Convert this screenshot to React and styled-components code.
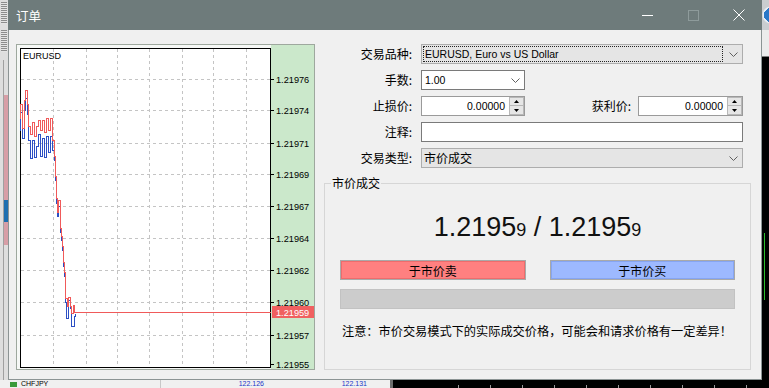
import React from 'react';
import styled, { createGlobalStyle } from 'styled-components';

const GlobalStyle = createGlobalStyle`
  html, body {
    margin: 0;
    padding: 0;
    background: #f0f0f0;
  }
  body {
    font-family: "Liberation Sans", "Noto Sans CJK SC", sans-serif;
    color: #000;
  }
`;

const cjk = `"Noto Sans CJK SC", "Liberation Sans", sans-serif`;

// chart data, drawn in page coordinates (viewBox matches the panel position)
const askPath =
  'M20 118V104H22V128H24V100H25V90H27V104H28V126H30V134H32V122H34V136H36V126H38V120H40V130H42V120H44V132H46V118H48V130H50V118H52V140H54V156H55V176H56V198H57V212H58V200H60V228H61V236H62V246H63V262H64V272H65V298H67V306H68V297H70V306H71V313H73V305H74V312H270';
const bidPath =
  'M20 130V112H22V138H24V110H25V98H27V114H28V140H30V158H32V140H34V157H36V146H38V134H40V156H42V138H44V157H46V136H48V152H50V136H52V150H54V160H55V180H56V203H57V216H58V206H60V232H61V240H62V250H63V266H64V276H65V302H66V318H68V300H70V308H71V326H74V316H75V313';

const gridX = [53, 86, 117, 149, 182, 213, 246];
const gridY = [79, 110, 143, 174, 206, 238, 270, 302, 335];
const axisLabels = [
  [79, '1.21976'],
  [110, '1.21974'],
  [143, '1.21971'],
  [174, '1.21969'],
  [206, '1.21967'],
  [238, '1.21964'],
  [270, '1.21962'],
  [302, '1.21960'],
  [335, '1.21957'],
  [364, '1.21955'],
];

const Chart = () => (
  <ChartSvg viewBox="17 45 297 324" width="297" height="324">
    <rect x="17" y="45" width="297" height="324" fill="#f6f8f6" />
    <rect x="271" y="45" width="43" height="324" fill="#cbe8cb" />
    <rect x="20.5" y="48.5" width="250" height="319" fill="#fff" stroke="#000" />
    {gridX.map((x) => (
      <line key={x} x1={x + 0.5} x2={x + 0.5} y1="49" y2="367" stroke="#c4c4c4" strokeDasharray="3 3" />
    ))}
    {gridY.map((y) => (
      <line key={y} x1="21" x2="270" y1={y + 0.5} y2={y + 0.5} stroke="#c4c4c4" strokeDasharray="3 3" />
    ))}
    <g transform="translate(0.5 0.5)" shapeRendering="crispEdges">
      <path d={bidPath} fill="none" stroke="#2c4fc4" strokeWidth="1" />
      <path d={askPath} fill="none" stroke="#f05a5a" strokeWidth="1" />
    </g>
    {axisLabels.map(([y, t]) => (
      <g key={t}>
        <line x1="271" x2="274" y1={y + 0.5} y2={y + 0.5} stroke="#000" />
        <text x="276" y={y + 3.5} fontSize="9.2" fontFamily="Liberation Sans, sans-serif" fill="#000">
          {t}
        </text>
      </g>
    ))}
    <rect x="272" y="306" width="42" height="12" fill="#f06060" />
    <text x="276" y="315.5" fontSize="9.2" fontFamily="Liberation Sans, sans-serif" fill="#fff">
      1.21959
    </text>
    <text x="23" y="59" fontSize="9" fontFamily="Liberation Sans, sans-serif" fill="#000">
      EURUSD
    </text>
  </ChartSvg>
);

const Chevron = () => (
  <ChevronBox>
    <svg width="9" height="5" viewBox="0 0 9 5">
      <polyline points="0.5,0.5 4.5,4.5 8.5,0.5" fill="none" stroke="#606060" />
    </svg>
  </ChevronBox>
);

const Spin = ({ value, width }) => (
  <SpinBox $width={width}>
    <SpinValue>{value}</SpinValue>
    <SpinButtons>
      <SpinButton>
        <svg width="5" height="3" viewBox="0 0 5 3">
          <path d="M0 3L2.5 0L5 3Z" fill="#000" />
        </svg>
      </SpinButton>
      <SpinButton>
        <svg width="5" height="3" viewBox="0 0 5 3">
          <path d="M0 0L2.5 3L5 0Z" fill="#000" />
        </svg>
      </SpinButton>
    </SpinButtons>
  </SpinBox>
);

export default function App() {
  return (
    <>
      <GlobalStyle />
      <Desktop>
        <LeftStrip />
        <Window>
          <TitleBar>
            <Title>订单</Title>
            <Controls>
              <CtrlButton>
                <svg width="11" height="11" viewBox="0 0 11 11">
                  <path d="M0 5.5H11" stroke="#fff" />
                </svg>
              </CtrlButton>
              <CtrlButton>
                <svg width="11" height="11" viewBox="0 0 11 11">
                  <rect x="0.5" y="0.5" width="10" height="10" fill="none" stroke="#8e9b9b" />
                </svg>
              </CtrlButton>
              <CtrlButton>
                <svg width="12" height="12" viewBox="0 0 12 12">
                  <path d="M0.5 0.5L11.5 11.5M11.5 0.5L0.5 11.5" stroke="#fff" />
                </svg>
              </CtrlButton>
            </Controls>
          </TitleBar>
          <Body>
            <ChartPanel>
              <Chart />
            </ChartPanel>
            <Side>
              <Form>
                <Label>交易品种:</Label>
                <Select $gray>
                  <Focus>EURUSD, Euro vs US Dollar</Focus>
                  <Chevron />
                </Select>

                <Label>手数:</Label>
                <Select $width={104} $dark>
                  <SelectValue>1.00</SelectValue>
                  <Chevron />
                </Select>

                <Label>止损价:</Label>
                <Pair>
                  <Spin value="0.00000" width={104} />
                  <InlineLabel>获利价:</InlineLabel>
                  <Spin value="0.00000" width={105} />
                </Pair>

                <Label>注释:</Label>
                <TextBox />

                <Label>交易类型:</Label>
                <Select $gray>
                  <SelectValue $cjk>市价成交</SelectValue>
                  <Chevron />
                </Select>
              </Form>

              <Group>
                <Legend>市价成交</Legend>
                <GroupBody>
                  <Price>
                    1.2195<Small>9</Small> / 1.2195<Small>9</Small>
                  </Price>
                  <Buttons>
                    <TradeButton $side="sell">于市价卖</TradeButton>
                    <TradeButton $side="buy">于市价买</TradeButton>
                  </Buttons>
                  <Progress />
                  <Note>注意：市价交易模式下的实际成交价格，可能会和请求价格有一定差异！</Note>
                </GroupBody>
              </Group>
            </Side>
          </Body>
        </Window>
        <RightStrip />
        <BottomStrip>
          <ListPart>
            <SymbolCell>
              <SymbolIcon />
              CHFJPY
            </SymbolCell>
            <PriceCell>122.126</PriceCell>
            <PriceCell>122.131</PriceCell>
          </ListPart>
          <DarkPart />
        </BottomStrip>
      </Desktop>
    </>
  );
}

const Desktop = styled.div`
  width: 769px;
  height: 388px;
  overflow: hidden;
  display: grid;
  grid-template-columns: 8px 754px 7px;
  grid-template-rows: 380px 8px;
`;

const LeftStrip = styled.div`
  background:
    linear-gradient(to bottom, transparent 0 95px, #d79ea6 95px 200px, #1e6fb0 200px 222px, #d79ea6 222px 245px, transparent 245px) 4px 0 / 4px 100% no-repeat,
    linear-gradient(to right, #a0a0a0 0 1px, transparent 1px) 3px 60px / 1px 100% no-repeat,
    repeating-linear-gradient(to bottom, #8c8c8c 0 1px, #e4e4e4 1px 2px) 1px 2px / 6px 22px no-repeat,
    repeating-linear-gradient(to bottom, #8c8c8c 0 1px, #e4e4e4 1px 2px) 1px 30px / 6px 22px no-repeat,
    #dedede;
`;

const RightStrip = styled.div`
  background:
    radial-gradient(circle at 9px 15px, #2a78c8 0 7px, #e8eef4 7px 8px, transparent 9px) 0 0 / 7px 30px no-repeat,
    linear-gradient(to bottom, transparent 0 233px, #2ec02e 233px 300px, transparent 300px) 2px 0 / 1px 100% no-repeat,
    linear-gradient(to bottom, #c9cdd0 0 30px, #ececec 30px 56px, #7a7a7a 56px 57px, #000 57px);
`;

const BottomStrip = styled.div`
  grid-column: 1 / -1;
  display: flex;
  overflow: hidden;
`;

const ListPart = styled.div`
  width: 390px;
  display: flex;
  background: #f0f0f0;
  border-right: 3px solid #6e6e6e;
  font-size: 7px;
  line-height: 8px;
`;

const SymbolCell = styled.div`
  width: 150px;
  padding-left: 10px;
  display: flex;
  align-items: center;
  gap: 4px;
  border-right: 1px solid #c8c8c8;
  color: #000;
`;

const SymbolIcon = styled.span`
  width: 7px;
  height: 5px;
  background: #3a9a3a;
`;

const PriceCell = styled.div`
  width: 103px;
  text-align: right;
  color: #2036c8;
`;

const DarkPart = styled.div`
  flex: 1;
  background:
    repeating-linear-gradient(to right, transparent 0 31px, #9a9a9a 31px 32px) 34px 5px / 100% 3px no-repeat,
    #000;
`;

const Window = styled.div`
  display: flex;
  flex-direction: column;
  background: #f0f0f0;
`;

const TitleBar = styled.div`
  height: 30px;
  flex: none;
  display: flex;
  align-items: center;
  background: #6e7b7b;
  padding-left: 8px;
`;

const Title = styled.div`
  flex: 1;
  color: #fff;
  font-family: ${cjk};
  font-size: 12.5px;
`;

const Controls = styled.div`
  display: flex;
  height: 100%;
`;

const CtrlButton = styled.div`
  width: 46px;
  display: flex;
  align-items: center;
  justify-content: center;

  svg {
    display: block;
  }
`;

const Body = styled.div`
  flex: 1;
  display: flex;
  gap: 9px;
  padding: 14px 10px 9px 7px;
  border: 1px solid #8c9494;
  border-top: 0;
`;

const ChartPanel = styled.div`
  width: 299px;
  border: 1px solid #9ea89e;
  box-sizing: border-box;
`;

const ChartSvg = styled.svg`
  display: block;
`;

const Side = styled.div`
  flex: 1;
  display: flex;
  flex-direction: column;
`;

const Form = styled.div`
  display: grid;
  grid-template-columns: 88px 1fr;
  grid-auto-rows: 20px;
  column-gap: 9px;
  row-gap: 6px;
  padding-right: 8px;
`;

const Label = styled.div`
  font-family: ${cjk};
  font-size: 12px;
  text-align: right;
  align-self: center;
  line-height: 16px;
`;

const InlineLabel = styled(Label)`
  flex: 1;
  margin-right: 7px;
`;

const Select = styled.div`
  box-sizing: border-box;
  height: 20px;
  width: ${(p) => (p.$width ? `${p.$width}px` : 'auto')};
  display: flex;
  align-items: stretch;
  background: ${(p) => (p.$gray ? '#e5e5e5' : '#fff')};
  border: 1px solid ${(p) => (p.$dark ? '#7a7a7a' : '#adadad')};
`;

const Focus = styled.div`
  flex: 1;
  margin: 1px;
  padding-left: 1px;
  border: 1px dotted #222;
  font-size: 10.5px;
  line-height: 14px;
  white-space: nowrap;
`;

const SelectValue = styled.div`
  flex: 1;
  padding-left: ${(p) => (p.$cjk ? '2px' : '3px')};
  font-family: ${(p) => (p.$cjk ? cjk : `"Liberation Sans", sans-serif`)};
  font-size: ${(p) => (p.$cjk ? '12px' : '10.5px')};
  line-height: 18px;
`;

const ChevronBox = styled.div`
  width: 18px;
  display: flex;
  align-items: center;
  justify-content: center;

  svg {
    display: block;
  }
`;

const Pair = styled.div`
  display: flex;
  align-items: stretch;
`;

const SpinBox = styled.div`
  box-sizing: border-box;
  width: ${(p) => p.$width}px;
  display: flex;
  background: #fff;
  border: 1px solid #9a9a9a;
`;

const SpinValue = styled.div`
  flex: 1;
  text-align: right;
  padding-right: 4px;
  font-size: 10.5px;
  line-height: 18px;
`;

const SpinButtons = styled.div`
  width: 15px;
  display: grid;
  grid-template-rows: 1fr 1fr;
`;

const SpinButton = styled.div`
  display: flex;
  align-items: center;
  justify-content: center;
  background: #e6e6e6;
  border: 1px solid #b8b8b8;
  margin-top: -1px;

  &:first-child {
    margin-top: 0;
  }

  svg {
    display: block;
  }
`;

const TextBox = styled.div`
  box-sizing: border-box;
  height: 20px;
  background: #fff;
  border: 1px solid #7a7a7a;
`;

const Group = styled.fieldset`
  flex: 1;
  margin: 8px 0 0;
  padding: 0;
  min-width: 0;
  border: 1px solid #d6d6d6;
  display: flex;
  flex-direction: column;
`;

const Legend = styled.legend`
  margin-left: 6px;
  padding: 0 1px;
  font-family: ${cjk};
  font-size: 12px;
  line-height: 14px;
`;

const GroupBody = styled.div`
  display: flex;
  flex-direction: column;
  padding: 0 15px;
`;

const Price = styled.div`
  margin-top: 21px;
  height: 32px;
  font-family: "Liberation Sans", sans-serif;
  font-size: 27px;
  line-height: 32px;
  text-align: center;
  color: #111;
`;

const Small = styled.span`
  font-size: 18px;
`;

const Buttons = styled.div`
  margin-top: 17px;
  display: grid;
  grid-template-columns: 1fr 1fr;
  column-gap: 24px;
`;

const TradeButton = styled.div`
  box-sizing: border-box;
  height: 20px;
  display: flex;
  align-items: center;
  justify-content: center;
  font-family: ${cjk};
  font-size: 12px;
  background: ${(p) => (p.$side === 'sell' ? '#ff8080' : '#9db9ff')};
  border: 1px solid #a9a9a9;
  box-shadow: inset 0 0 0 1px ${(p) => (p.$side === 'sell' ? '#ee6c6c' : '#86a5f2')};
`;

const Progress = styled.div`
  margin-top: 9px;
  height: 20px;
  box-sizing: border-box;
  background: #cccccc;
  border: 1px solid #c2c2c2;
`;

const Note = styled.div`
  margin-top: 14px;
  padding-left: 2px;
  font-family: ${cjk};
  font-size: 12.2px;
  line-height: 16px;
  white-space: nowrap;
`;
